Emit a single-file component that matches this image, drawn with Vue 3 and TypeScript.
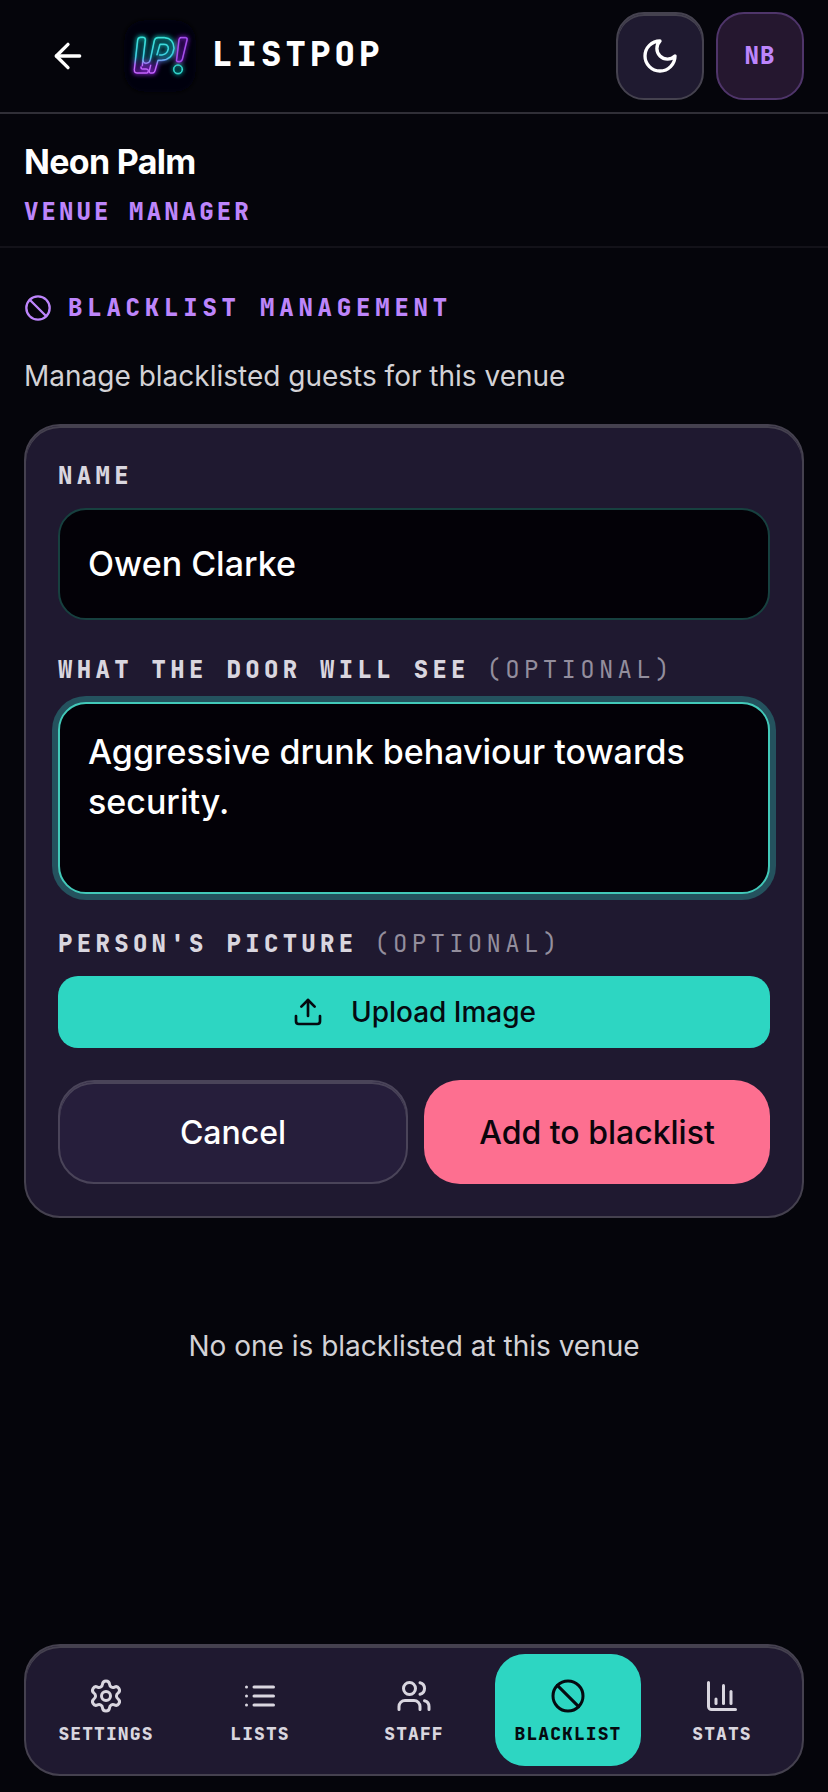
<script setup lang="ts">
import { ref } from 'vue'

interface NavItem {
  id: string
  label: string
  paths: string[]
  circle?: [number, number, number]
}

const venue = ref('Neon Palm')
const guestName = ref('Owen Clarke')
const doorNote = ref('Aggressive drunk behaviour towards security.')
const activeTab = ref('blacklist')

const navItems: NavItem[] = [
  {
    id: 'settings',
    label: 'Settings',
    paths: [
      'M9.671 4.136a2.34 2.34 0 0 1 4.659 0 2.34 2.34 0 0 0 3.319 1.915 2.34 2.34 0 0 1 2.33 4.033 2.34 2.34 0 0 0 0 3.831 2.34 2.34 0 0 1-2.33 4.033 2.34 2.34 0 0 0-3.319 1.915 2.34 2.34 0 0 1-4.659 0 2.34 2.34 0 0 0-3.32-1.915 2.34 2.34 0 0 1-2.33-4.033 2.34 2.34 0 0 0 0-3.831A2.34 2.34 0 0 1 6.35 6.051a2.34 2.34 0 0 0 3.319-1.915',
    ],
    circle: [12, 12, 3],
  },
  {
    id: 'lists',
    label: 'Lists',
    paths: ['M3 6h.01', 'M3 12h.01', 'M3 18h.01', 'M8 6h13', 'M8 12h13', 'M8 18h13'],
  },
  {
    id: 'staff',
    label: 'Staff',
    paths: [
      'M16 21v-2a4 4 0 0 0-4-4H6a4 4 0 0 0-4 4v2',
      'M22 21v-2a4 4 0 0 0-3-3.87',
      'M16 3.13a4 4 0 0 1 0 7.75',
    ],
    circle: [9, 7, 4],
  },
  { id: 'blacklist', label: 'Blacklist', paths: ['m4.9 4.9 14.2 14.2'], circle: [12, 12, 10] },
  {
    id: 'stats',
    label: 'Stats',
    paths: ['M3 3v16a2 2 0 0 0 2 2h16', 'M18 17V9', 'M13 17V5', 'M8 17v-3'],
  },
]
</script>

<template>
  <div class="screen">
    <header class="topbar">
      <button class="back" type="button" aria-label="Back">
        <svg class="icon icon-lg" viewBox="0 0 24 24"><path d="m12 19-7-7 7-7" /><path d="M19 12H5" /></svg>
      </button>
      <svg class="logo" viewBox="0 0 216 216" aria-hidden="true">
        <defs>
          <linearGradient id="tube" gradientUnits="userSpaceOnUse" x1="0" y1="50" x2="0" y2="162">
            <stop offset="0" stop-color="#18c9bf" />
            <stop offset=".55" stop-color="#18b0c4" />
            <stop offset=".75" stop-color="#8a2fe0" />
            <stop offset="1" stop-color="#9a2ae6" />
          </linearGradient>
          <linearGradient id="core" gradientUnits="userSpaceOnUse" x1="0" y1="50" x2="0" y2="162">
            <stop offset="0" stop-color="#4fe9df" />
            <stop offset=".55" stop-color="#5cd6ea" />
            <stop offset=".78" stop-color="#cf86f8" />
            <stop offset="1" stop-color="#d68af8" />
          </linearGradient>
          <filter id="glow" x="-30%" y="-30%" width="160%" height="160%">
            <feGaussianBlur stdDeviation="7" />
          </filter>
          <g id="mark">
            <path d="M55 137L64 61Q65 52 57 52H50Q42 52 41 60L31 149Q30 159 39 159H68Q73 159 73 152Q73 147 66 147H55Q50 147 51 141" />
            <path d="M57 122Q58 130 66 130Q77 130 79 119L91 62Q93 53 102 53H121Q149 55 150 85Q146 119 112 121H102L93 152Q91 159 85 159H80Q74 159 76 152L80 136" />
            <path d="M99 104L108 73H120Q133 73 133 86Q130 103 114 105H107" />
          </g>
          <path id="bang" d="M170 53H184Q191 53 189 60L175 118Q173 125 167 125H162Q156 125 158 118L165 59Q166 53 170 53Z" />
        </defs>
        <rect width="216" height="216" rx="60" fill="#020207" filter="url(#glow)" />
        <g class="neon">
          <g filter="url(#glow)" opacity=".75">
            <use href="#mark" stroke="url(#tube)" stroke-width="11" />
            <use href="#bang" stroke="#7a1cc8" stroke-width="11" />
            <circle cx="162" cy="148" r="13" stroke="#10b0a8" stroke-width="9" />
          </g>
          <use href="#mark" stroke="url(#tube)" stroke-width="5" />
          <use href="#mark" stroke="url(#core)" stroke-width="2.5" />
          <use href="#bang" stroke="#8a2ed8" stroke-width="5" />
          <use href="#bang" stroke="#b970f0" stroke-width="2" />
          <circle cx="162" cy="148" r="13" stroke="#18b8b0" stroke-width="5" />
          <circle cx="162" cy="148" r="13" stroke="#4fe0d8" stroke-width="2" />
        </g>
      </svg>
      <span class="brand">LISTPOP</span>
      <div class="tools">
        <button class="tool theme" type="button" aria-label="Theme">
          <svg class="icon icon-lg" viewBox="0 0 24 24"><path d="M12 3a6 6 0 0 0 9 9 9 9 0 1 1-9-9Z" /></svg>
        </button>
        <button class="tool avatar" type="button">NB</button>
      </div>
    </header>

    <section class="venue">
      <h1>{{ venue }}</h1>
      <p>Venue manager</p>
    </section>

    <main class="content">
      <h2 class="section-title">
        <svg class="icon icon-sm" viewBox="0 0 24 24"><circle cx="12" cy="12" r="10" /><path d="m4.9 4.9 14.2 14.2" /></svg>
        <span>Blacklist management</span>
      </h2>
      <p class="intro">Manage blacklisted guests for this venue</p>

      <form class="card" @submit.prevent>
        <label class="label" for="guest">Name</label>
        <input id="guest" v-model="guestName" class="field" type="text" />

        <label class="label" for="note">What the door will see <span>(optional)</span></label>
        <textarea id="note" v-model="doorNote" class="field note"></textarea>

        <div class="label">Person's picture <span>(optional)</span></div>
        <button class="upload" type="button">
          <svg class="icon icon-md" viewBox="0 0 24 24"><path d="M21 15v4a2 2 0 0 1-2 2H5a2 2 0 0 1-2-2v-4" /><path d="m17 8-5-5-5 5" /><path d="M12 3v12" /></svg>
          Upload Image
        </button>

        <div class="actions">
          <button class="btn cancel" type="button">Cancel</button>
          <button class="btn add" type="submit">Add to blacklist</button>
        </div>
      </form>

      <p class="empty">No one is blacklisted at this venue</p>
    </main>

    <nav class="tabs">
      <button
        v-for="item in navItems"
        :key="item.id"
        type="button"
        class="tab"
        :class="{ active: item.id === activeTab }"
        @click="activeTab = item.id"
      >
        <svg class="icon icon-tab" viewBox="0 0 24 24">
          <path v-for="d in item.paths" :key="d" :d="d" />
          <circle v-if="item.circle" :cx="item.circle[0]" :cy="item.circle[1]" :r="item.circle[2]" />
        </svg>
        <span>{{ item.label }}</span>
      </button>
    </nav>
  </div>
</template>

<style>
body {
  background: #05050b;
}
</style>

<style scoped>
.screen {
  box-sizing: border-box;
  width: 828px;
  height: 1792px;
  display: flex;
  flex-direction: column;
  overflow: hidden;
  background: #05050b;
  color: #fff;
  font-family: Inter, "Liberation Sans", sans-serif;
  padding-bottom: 16px;
}
.screen * {
  box-sizing: border-box;
}
h1,
h2,
p {
  margin: 0;
}
button {
  margin: 0;
  padding: 0;
  border: 0;
  background: none;
  color: inherit;
  font: inherit;
}
.icon {
  flex: none;
  fill: none;
  stroke: currentColor;
  stroke-width: 2;
  stroke-linecap: round;
  stroke-linejoin: round;
}
.icon-lg { width: 40px; height: 40px; }
.icon-sm { width: 28px; height: 28px; }
.icon-md { width: 32px; height: 32px; }
.icon-tab { width: 36px; height: 36px; }

.topbar {
  flex: none;
  height: 114px;
  padding: 0 24px;
  display: flex;
  align-items: center;
  border-bottom: 2px solid #302f37;
}
.back {
  width: 88px;
  height: 88px;
  display: grid;
  place-items: center;
}
.logo {
  width: 72px;
  height: 72px;
  margin: 0 16px 0 12px;
  overflow: visible;
}
.neon {
  fill: none;
  stroke-linecap: round;
  stroke-linejoin: round;
}
.brand {
  font: 800 34px/44px "JetBrains Mono", "DejaVu Sans Mono", monospace;
  letter-spacing: 0.12em;
  padding-bottom: 4px;
}
.tools {
  margin-left: auto;
  display: flex;
  gap: 12px;
}
.tool {
  width: 88px;
  height: 88px;
  border-radius: 28px;
  display: grid;
  place-items: center;
}
.theme {
  background: #1f1a30;
  border: 2px solid #45424f;
  box-shadow: inset 0 2px #45424f;
}
.avatar {
  background: #25172f;
  border: 2px solid #4f356a;
  color: #bd85fb;
  font: 800 24px/32px "JetBrains Mono", "DejaVu Sans Mono", monospace;
  letter-spacing: 0.05em;
}

.venue {
  flex: none;
  height: 134px;
  padding: 25px 24px 0;
  border-bottom: 2px solid #131219;
}
.venue h1 {
  font-size: 34px;
  line-height: 46px;
  font-weight: 700;
  letter-spacing: -0.02em;
}
.venue p {
  margin-top: 9px;
  font: 800 24px/36px "JetBrains Mono", "DejaVu Sans Mono", monospace;
  letter-spacing: 0.13em;
  text-transform: uppercase;
  color: #bd85fb;
}

.content {
  flex: 1;
  padding: 40px 24px 0;
}
.section-title {
  display: flex;
  align-items: center;
  gap: 16px;
  height: 40px;
  color: #bd85fb;
  font: 800 24px/40px "JetBrains Mono", "DejaVu Sans Mono", monospace;
  letter-spacing: 0.2em;
  text-transform: uppercase;
}
.intro {
  margin-top: 28px;
  font-size: 28px;
  line-height: 40px;
  color: #d3d2d6;
}
.card {
  margin-top: 28px;
  height: 794px;
  padding: 32px;
  border: 2px solid #45414f;
  border-radius: 36px;
  background: #1f1930;
  box-shadow: inset 0 2px #45414f;
}
.label {
  display: block;
  height: 36px;
  margin-bottom: 14px;
  font: 800 24px/36px "JetBrains Mono", "DejaVu Sans Mono", monospace;
  letter-spacing: 0.18em;
  text-transform: uppercase;
  color: #d9d6df;
}
.label span {
  margin-left: -2px;
  font-weight: 400;
  color: #938e9d;
}
.field {
  display: block;
  width: 100%;
  height: 112px;
  margin: 0 0 32px;
  padding: 0 28px 2px;
  border: 2px solid #17403f;
  border-radius: 28px;
  outline: none;
  background: #030107;
  color: #fff;
  font: 500 34px/50px Inter, "Liberation Sans", sans-serif;
}
.note {
  height: 192px;
  padding: 23px 28px;
  resize: none;
  overflow: hidden;
  border-color: #42c9b9;
  box-shadow: 0 0 0 6px #24525e;
}
.upload {
  width: 100%;
  height: 72px;
  border-radius: 20px;
  display: flex;
  align-items: center;
  justify-content: center;
  gap: 27px;
  background: #2dd6c2;
  color: #050a10;
  font-size: 28px;
  font-weight: 500;
}
.actions {
  margin-top: 32px;
  display: grid;
  grid-template-columns: 350px 346px;
  gap: 16px;
}
.btn {
  height: 104px;
  border-radius: 36px;
  font-size: 32px;
  font-weight: 500;
}
.cancel {
  background: #261e3b;
  border: 2px solid #4a4459;
  box-shadow: inset 0 2px #4a4459;
}
.add {
  background: #fd6f90;
  color: #0b050c;
}
.empty {
  margin-top: 108px;
  font-size: 28px;
  line-height: 40px;
  text-align: center;
  color: #d3d2d6;
}

.tabs {
  flex: none;
  height: 132px;
  margin: 0 24px;
  padding: 8px 7px;
  display: grid;
  grid-template-columns: repeat(5, 146px);
  gap: 8px;
  border: 2px solid #45414f;
  border-radius: 36px;
  background: #1f1930;
  box-shadow: inset 0 2px #45414f;
}
.tab {
  display: flex;
  flex-direction: column;
  align-items: center;
  padding-top: 24px;
  border-radius: 30px;
  color: #d9d6df;
}
.tab span {
  margin-top: 8px;
  font: 800 18px/24px "JetBrains Mono", "DejaVu Sans Mono", monospace;
  letter-spacing: 0.06em;
  text-transform: uppercase;
}
.tab.active {
  background: #2dd6c2;
  color: #050a10;
}
</style>
